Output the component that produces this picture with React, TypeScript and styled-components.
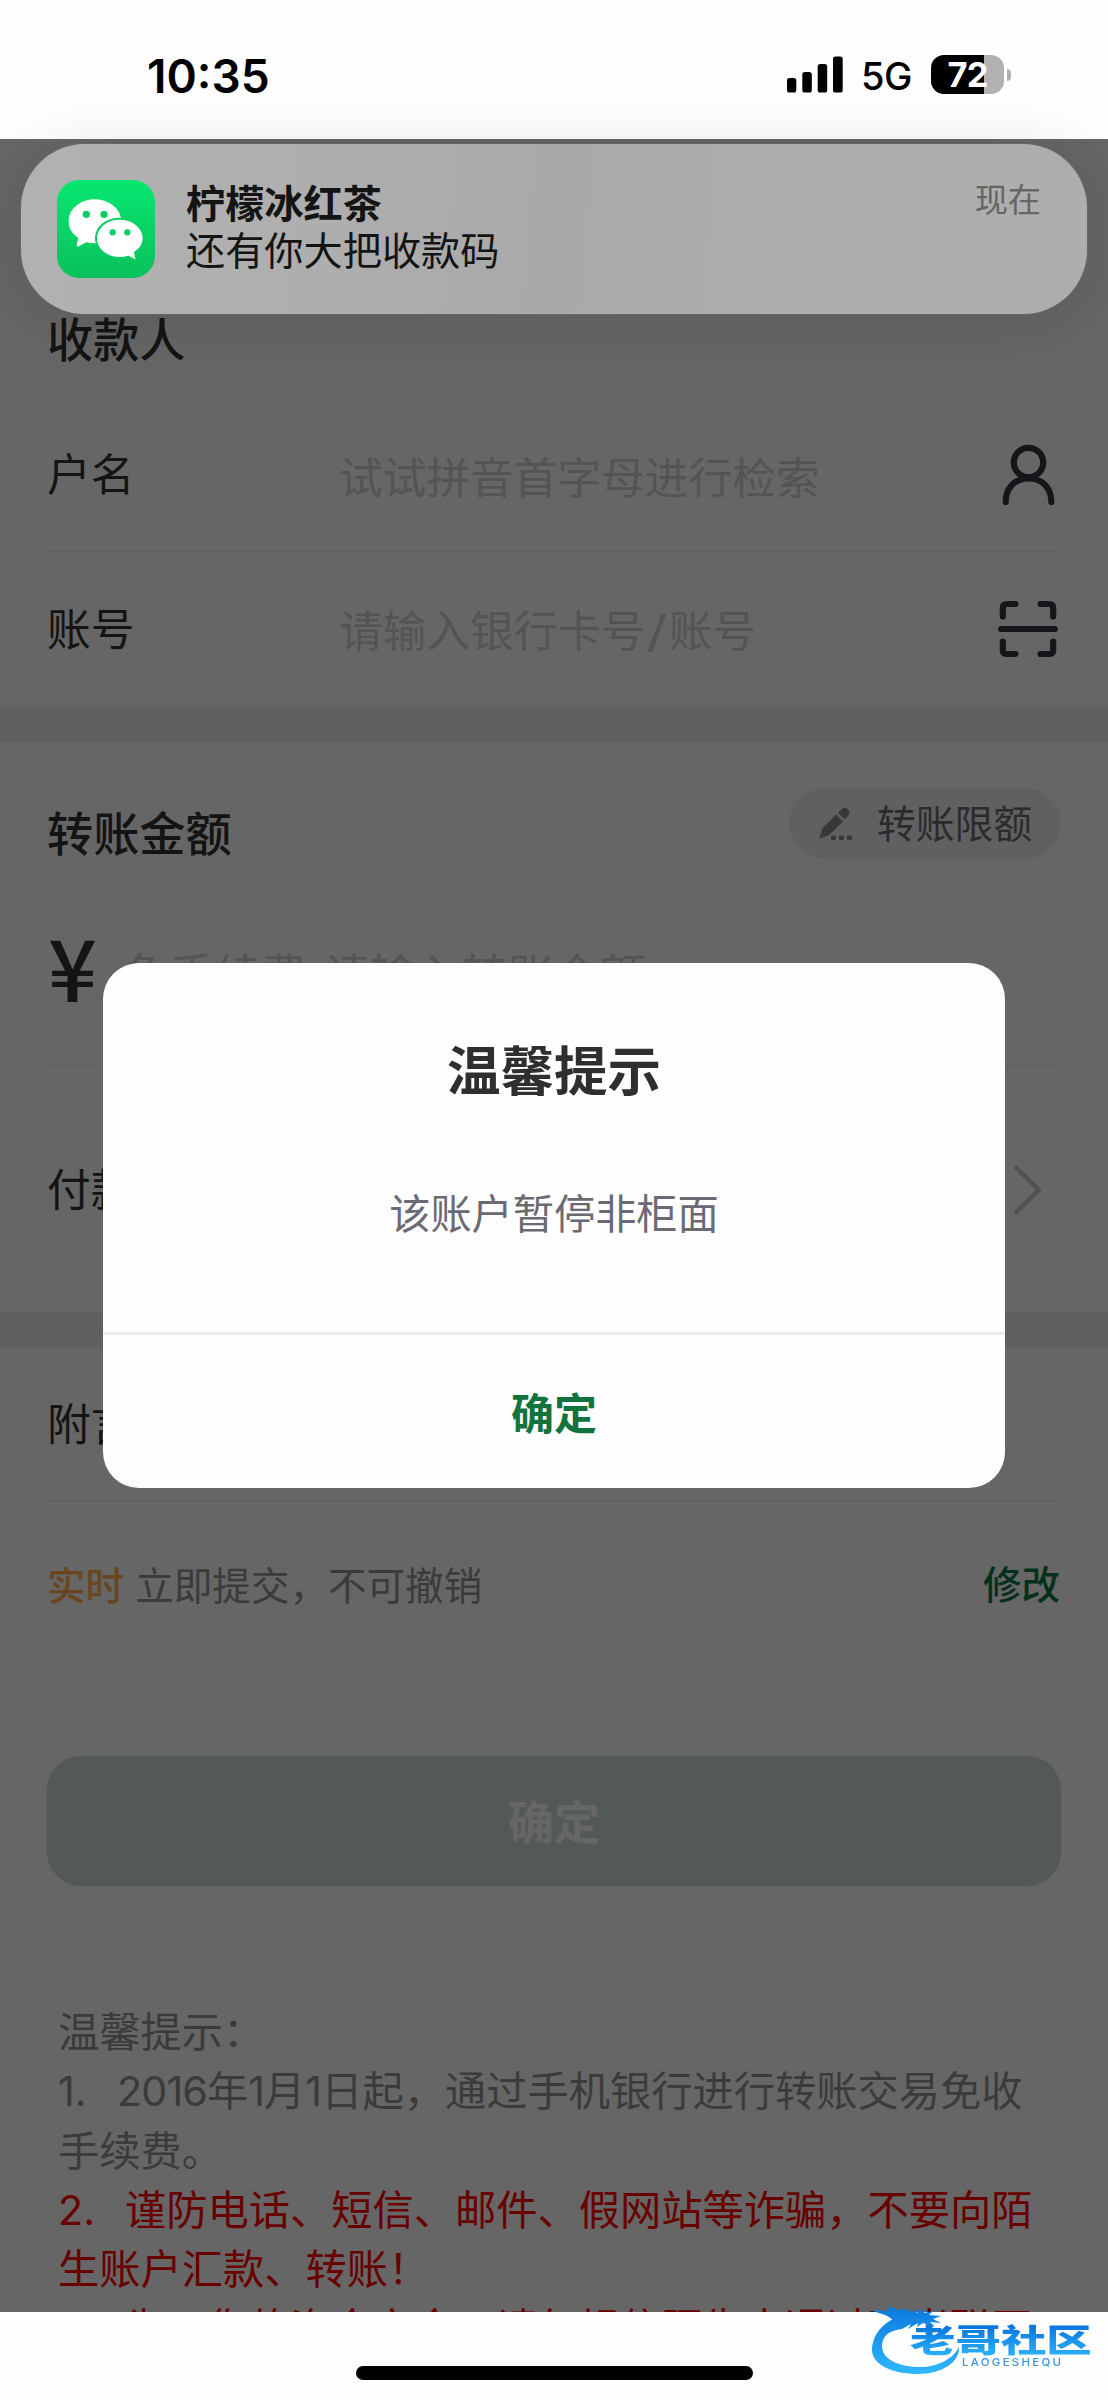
import React from 'react';
import styled, { createGlobalStyle } from 'styled-components';

const GlobalStyle = createGlobalStyle`
  * { box-sizing: border-box; }
  body { margin: 0; background: #666666; }
`;

const Screen = styled.div`
  position: relative;
  width: 1108px;
  height: 2400px;
  overflow: hidden;
  display: flex;
  flex-direction: column;
  background: #666666;
  color: #141414;
  font-family: 'Inter', 'Noto Sans CJK SC', sans-serif;
  white-space: nowrap;
`;

const StatusBar = styled.header`
  height: 139px;
  flex: none;
  display: flex;
  justify-content: space-between;
  align-items: flex-start;
  padding: 55px 97px 0 147px;
  background: #fefefe;
  color: #000;
`;

const Clock = styled.div`
  font-size: 46px;
  font-weight: 600;
  line-height: 42px;
`;

const StatusIcons = styled.div`
  display: flex;
  align-items: center;
  height: 39px;
`;

const Network = styled.span`
  font-size: 38px;
  font-weight: 450;
  line-height: 39px;
  margin: 4px 19px 0 18px;
  letter-spacing: -0.4px;
`;

const Battery = styled.div`
  width: 73px;
  height: 39px;
  border-radius: 13px;
  background: linear-gradient(to right, #000 53px, #b1b1b1 53px);
  color: #fff;
  font-size: 34.5px;
  font-weight: 700;
  line-height: 39px;
  text-align: center;
  letter-spacing: -1px;
`;

const BatteryTip = styled.div`
  width: 4px;
  height: 12px;
  margin-left: 3px;
  border-radius: 0 6px 6px 0;
  background: #b1b1b1;
`;

const Banner = styled.aside`
  position: absolute;
  left: 21px;
  top: 144px;
  width: 1066px;
  height: 170px;
  border-radius: 64px;
  display: flex;
  align-items: flex-start;
  padding: 36px 46px 0 36px;
  background: linear-gradient(95deg, #b1b1b1 0%, #afafaf 25%, #a9a9a9 50%, #abadac 72%, #aeaeae 100%);
  box-shadow: 0 0 0 1px rgba(120, 120, 120, 0.3), 0 6px 60px rgba(0, 0, 0, 0.12);
`;

const BannerBody = styled.div`
  flex: 1;
  margin: 1px 0 0 31px;
  font-size: 39.2px;
  line-height: 46.5px;
`;

const BannerTitle = styled.div`
  font-weight: 700;
`;

const BannerTime = styled.div`
  font-size: 33.2px;
  line-height: 40px;
  color: #666;
`;

const Section = styled.section<{ $h: number }>`
  height: ${(p) => p.$h}px;
  flex: none;
`;

const Band = styled.div<{ $h: number }>`
  height: ${(p) => p.$h}px;
  flex: none;
  background: #606062;
`;

const Heading = styled.h2`
  margin: 0;
  font-size: 46.2px;
  line-height: 60px;
  font-weight: 500;
`;

const HeadRow = styled.div<{ $h: number; $top: number }>`
  height: ${(p) => p.$h}px;
  padding: ${(p) => p.$top}px 47px 0;
  display: flex;
  justify-content: space-between;
  align-items: flex-start;
`;

const Row = styled.div<{ $h: number; $line?: boolean }>`
  height: ${(p) => p.$h}px;
  flex: none;
  margin: 0 47px;
  display: flex;
  align-items: center;
  border-bottom: ${(p) => (p.$line ? '2px solid #616161' : '0')};
`;

const Label = styled.div`
  width: 292px;
  font-size: 43.8px;
  line-height: 60px;
  padding-top: 3px;
`;

const Placeholder = styled.div<{ $size?: number; $shift?: number }>`
  flex: 1;
  font-size: ${(p) => p.$size ?? 43.7}px;
  line-height: 60px;
  padding-top: ${(p) => p.$shift ?? 0}px;
  word-spacing: 4px;
  color: #545454;
`;

const Slash = styled.span`
  display: inline-block;
  width: 24px;
  text-align: center;
  transform: scaleX(1.35);
`;

const IconSlot = styled.div<{ $right: number }>`
  display: flex;
  margin-left: auto;
  margin-right: ${(p) => p.$right}px;
`;

const LimitPill = styled.div`
  width: 272px;
  height: 71px;
  margin-top: -16px;
  border-radius: 36px;
  display: flex;
  align-items: center;
  padding-left: 30px;
  gap: 24px;
  background: #606062;
  color: #2b2b2b;
  font-size: 38.8px;
  line-height: 60px;
`;

const Yen = styled.div`
  width: 76px;
  margin-top: -15px;
  padding-left: 1px;
  font-family: 'Noto Sans CJK SC', sans-serif;
  font-size: 86px;
  font-weight: 500;
  line-height: 80px;
`;

const Timing = styled.div`
  font-size: 38.6px;
  line-height: 60px;
  padding-top: 2px;
  color: #3b3b3b;
`;

const Tag = styled.span`
  font-weight: 500;
  color: #694620;
  margin-right: 11px;
`;

const Edit = styled.div`
  margin-left: auto;
  padding-right: 1px;
  font-size: 38.5px;
  line-height: 60px;
  font-weight: 500;
  color: #06301b;
`;

const Submit = styled.button`
  flex: none;
  height: 130px;
  margin: 88px 47px 0;
  padding: 0 0 5px;
  border: 0;
  border-radius: 34px;
  background: #535a55;
  color: #666;
  font-family: inherit;
  font-size: 46px;
  font-weight: 700;
`;

const Notes = styled.div`
  flex: 1;
  min-height: 0;
  overflow: hidden;
  padding: 117px 0 0 58px;
  font-size: 41.25px;
  line-height: 59.3px;
  color: #3b3b3b;
`;

const NoteLine = styled.div<{ $red?: boolean }>`
  color: ${(p) => (p.$red ? '#680000' : 'inherit')};
`;

const Index = styled.span<{ $w: number }>`
  display: inline-block;
  width: ${(p) => p.$w}px;
`;

const Digits = styled.span`
  letter-spacing: -0.9px;
`;

const BottomBar = styled.footer`
  height: 88px;
  flex: none;
  display: flex;
  justify-content: center;
  align-items: flex-start;
  padding-top: 54px;
  background: #fefefe;
`;

const HomeIndicator = styled.div`
  width: 397px;
  height: 14px;
  border-radius: 7px;
  background: #000;
`;

const Dialog = styled.div`
  position: absolute;
  left: 103px;
  top: 963px;
  width: 902px;
  height: 525px;
  border-radius: 36px;
  background: #fefefe;
  display: flex;
  flex-direction: column;
  align-items: center;
`;

const DialogTitle = styled.div`
  margin-top: 74px;
  font-size: 53.5px;
  line-height: 70px;
  font-weight: 700;
  color: #2f2f31;
`;

const DialogText = styled.div`
  margin-top: 77px;
  font-size: 41.2px;
  line-height: 60px;
  color: #6b6a72;
`;

const DialogAction = styled.div`
  margin-top: auto;
  width: 100%;
  height: 156px;
  border-top: 3px solid #ebecee;
  text-align: center;
  font-size: 43px;
  line-height: 158px;
  font-weight: 700;
  color: #12733e;
`;

const Watermark = styled.div`
  position: absolute;
  left: 868px;
  top: 2300px;
  width: 240px;
  height: 80px;
`;

const WatermarkRing = styled.svg`
  position: absolute;
  left: 0;
  top: 0;
`;

const WatermarkName = styled.div`
  position: absolute;
  left: 42px;
  top: 21px;
  font-size: 32px;
  line-height: 40px;
  font-weight: 900;
  transform: scaleX(1.42);
  transform-origin: 0 0;
  color: transparent;
  background: linear-gradient(#0a78df 15%, #2bb2fb 88%);
  background-clip: text;
  -webkit-background-clip: text;
`;

const WatermarkLatin = styled.div`
  position: absolute;
  left: 94px;
  top: 56px;
  font-size: 11px;
  line-height: 13px;
  letter-spacing: 2.2px;
  font-weight: 500;
  transform: scaleX(1.04);
  transform-origin: 0 0;
  color: #3b95dc;
`;

const SignalBars = () => (
  <svg width="56" height="37" viewBox="0 0 56 37">
    <rect x="0" y="22" width="9.3" height="14.5" rx="2.6" />
    <rect x="15.3" y="16" width="9.5" height="20.5" rx="2.6" />
    <rect x="30.7" y="8" width="9.5" height="28.5" rx="2.6" />
    <rect x="46" y="0.5" width="9.7" height="36" rx="2.6" />
  </svg>
);

const ChatAppIcon = () => (
  <svg width="98" height="98" viewBox="21 30 294 294">
    <defs>
      <linearGradient id="chat" x1="0" y1="0" x2="0" y2="1">
        <stop offset="0" stopColor="#07e770" />
        <stop offset="1" stopColor="#09c15c" />
      </linearGradient>
    </defs>
    <rect x="21" y="30" width="294" height="294" rx="66" fill="url(#chat)" />
    <path
      fill="#fff"
      d="M134 88c-43 0-78 29-78 66 0 21 11 38 29 50l-5 20c-1 5 2 7 6 5l23-12c8 2 16 3 25 3 45 0 80-29 80-66s-37-66-80-66z"
    />
    <path
      fill="#fff"
      stroke="#07cf65"
      strokeWidth="6"
      d="M209 146c-40 0-71 26-71 59s31 59 71 59c9 0 17-1 25-4l19 10c4 2 7 0 6-4l-4-18c16-11 26-26 26-43 0-33-32-59-72-59z"
    />
    <g fill="#08ce64">
      <circle cx="109" cy="133" r="11" />
      <circle cx="162" cy="133" r="11" />
      <circle cx="188" cy="187" r="9.5" />
      <circle cx="232" cy="187" r="9.5" />
    </g>
  </svg>
);

const PersonIcon = () => (
  <svg width="54" height="62" viewBox="0 0 54 62" fill="none" stroke="#15151a" strokeWidth="6.2" strokeLinecap="round">
    <circle cx="26.500" cy="18.500" r="14.700" />
    <path d="M3.700 58C3.700 43.500 13 34.500 26.500 34.500S49.300 43.500 49.300 58" />
  </svg>
);

const ScanIcon = () => (
  <svg width="60" height="58" viewBox="0 0 60 58" fill="none" stroke="#15151a" strokeWidth="6.2" strokeLinecap="round">
    <path d="M4.800 16.500V8q0-4 4-4h8.600M42.600 4h8.600q4 0 4 4v8.500M4.800 41.500V50q0 4 4 4h8.600M42.600 54h8.600q4 0 4-4v-8.500M3.200 29h53.600" />
  </svg>
);

const PencilIcon = () => (
  <svg width="34" height="34" viewBox="0 0 34 34" fill="#383839">
    <path d="M0.500 31.500L3.200 21.500 17.200 7.600 24 14.300 10 28.200z" />
    <path d="M19 5.800l3-3c2.400-2.400 5-2.100 7-.2s2.100 4.600-.2 7l-3 3z" />
    <rect x="12" y="28.500" width="5" height="4.500" rx="1" />
    <rect x="20" y="28.500" width="5" height="4.500" rx="1" />
    <rect x="28" y="28.500" width="5" height="4.500" rx="1" />
  </svg>
);

const Chevron = () => (
  <svg width="30" height="52" viewBox="0 0 30 52" fill="none" stroke="#525252" strokeWidth="4.500" strokeLinecap="round" strokeLinejoin="round">
    <path d="M3.500 4L26 26 3.500 48" />
  </svg>
);

export default function App() {
  return (
    <>
      <GlobalStyle />
      <Screen>
        <StatusBar>
          <Clock>10:35</Clock>
          <StatusIcons>
            <SignalBars />
            <Network>5G</Network>
            <Battery>72</Battery>
            <BatteryTip />
          </StatusIcons>
        </StatusBar>

        <Section $h={568}>
          <HeadRow $h={260} $top={171}>
            <Heading>收款人</Heading>
          </HeadRow>
          <Row $h={153} $line>
            <Label>户名</Label>
            <Placeholder $shift={9}>试试拼音首字母进行检索</Placeholder>
            <IconSlot $right={5}><PersonIcon /></IconSlot>
          </Row>
          <Row $h={154}>
            <Label>账号</Label>
            <Placeholder $shift={5}>请输入银行卡号<Slash>/</Slash>账号</Placeholder>
            <IconSlot $right={3}><ScanIcon /></IconSlot>
          </Row>
        </Section>

        <Band $h={35} />

        <Section $h={570}>
          <HeadRow $h={138} $top={62}>
            <Heading>转账金额</Heading>
            <LimitPill>
              <PencilIcon />
              转账限额
            </LimitPill>
          </HeadRow>
          <Row $h={187} $line>
            <Yen>¥</Yen>
            <Placeholder $size={46} $shift={5}>免手续费 请输入转账金额</Placeholder>
          </Row>
          <Row $h={245}>
            <Label>付款卡</Label>
            <IconSlot $right={18}><Chevron /></IconSlot>
          </Row>
        </Section>

        <Band $h={36} />

        <Row $h={154} $line>
          <Label>附言</Label>
        </Row>
        <Row $h={166}>
          <Timing><Tag>实时</Tag>立即提交，不可撤销</Timing>
          <Edit>修改</Edit>
        </Row>
        <Submit>确定</Submit>
        <Notes>
          <NoteLine>温馨提示：</NoteLine>
          <NoteLine>
            <Index $w={59}>1.</Index>
            <Digits>2016</Digits>年<Digits>1</Digits>月<Digits>1</Digits>日起，通过手机银行进行转账交易免收
          </NoteLine>
          <NoteLine>手续费。</NoteLine>
          <NoteLine $red><Index $w={67}>2.</Index>谨防电话、短信、邮件、假网站等诈骗，不要向陌</NoteLine>
          <NoteLine $red>生账户汇款、转账！</NoteLine>
          <NoteLine $red><Index $w={67}>3.</Index>为了您的资金安全，请勿轻信陌生人通过不当联网</NoteLine>
        </Notes>

        <BottomBar><HomeIndicator /></BottomBar>

        <Banner>
          <ChatAppIcon />
          <BannerBody>
            <BannerTitle>柠檬冰红茶</BannerTitle>
            <div>还有你大把收款码</div>
          </BannerBody>
          <BannerTime>现在</BannerTime>
        </Banner>

        <Dialog>
          <DialogTitle>温馨提示</DialogTitle>
          <DialogText>该账户暂停非柜面</DialogText>
          <DialogAction>确定</DialogAction>
        </Dialog>

        <Watermark>
          <WatermarkRing width="110" height="80" viewBox="0 0 110 80">
            <defs>
              <linearGradient id="ring" gradientUnits="userSpaceOnUse" x1="0" y1="6" x2="0" y2="74">
                <stop offset="0" stopColor="#0a78df" />
                <stop offset="1" stopColor="#2fb8fd" />
              </linearGradient>
            </defs>
            <path
              fill="url(#ring)"
              d="M30 17C16 22 4 34 4 51C5 65 25 74 50 74C74 74 92 62 91 47C85 59 70 67 52 67C32 67 14 60 14 46C14 37 22 28 36 26z"
            />
            <path
              fill="url(#ring)"
              d="M3 10l18 1-1-5 10 4 8-1 5 3 8-3-3 4 10-4-2 4 9-2-4 4 12 1-8 3 8 4-11-1 5 5-12-4-6 4 1-4-10 6 3-5-9 5c-8 1-13 3-18 8 1-7 5-11 10-15C20 13 10 14 3 10z"
            />
          </WatermarkRing>
          <WatermarkName>老哥社区</WatermarkName>
          <WatermarkLatin>LAOGESHEQU</WatermarkLatin>
        </Watermark>
      </Screen>
    </>
  );
}
